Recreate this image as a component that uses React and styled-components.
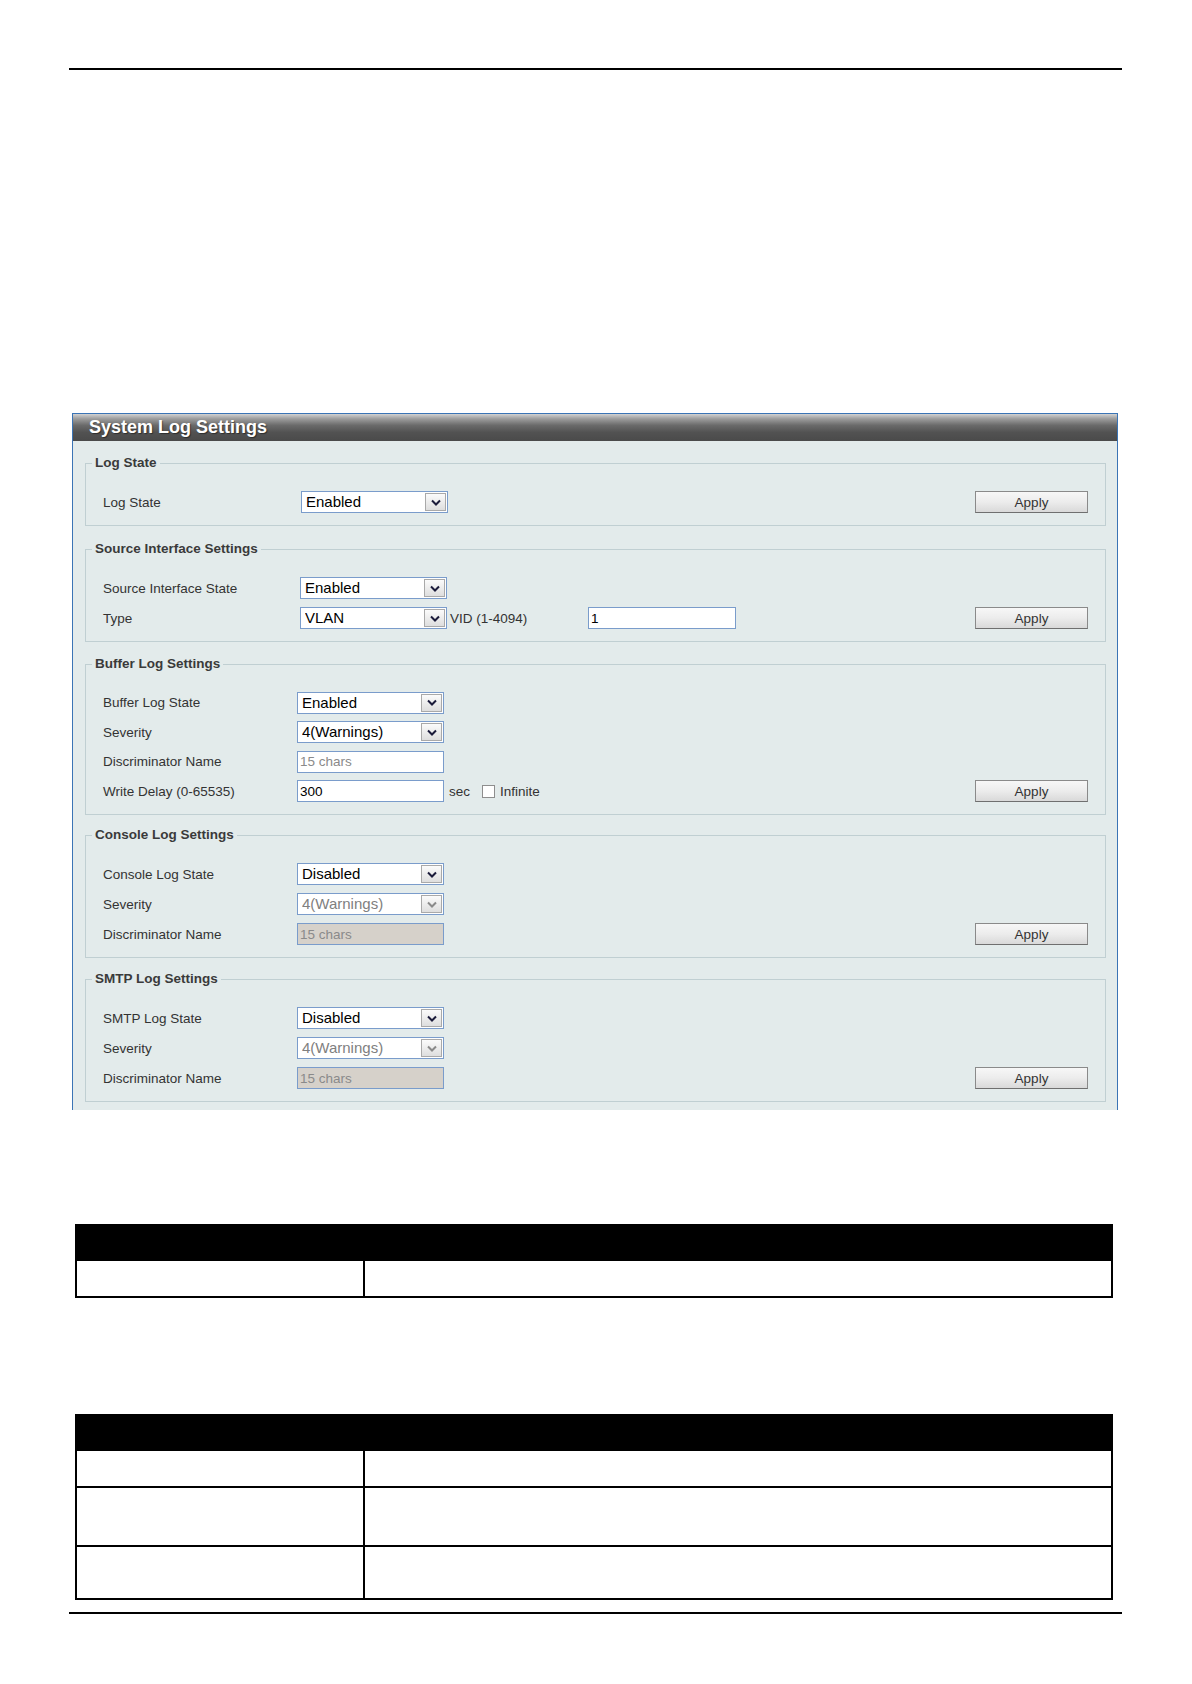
import React from "react";
import styled, { createGlobalStyle } from "styled-components";

const GlobalStyle = createGlobalStyle`
  html, body { margin: 0; padding: 0; background: #fff; }
  body { font-family: "Liberation Sans", Arial, sans-serif; color: #333; }
  * { box-sizing: border-box; }
`;

const Page = styled.div`
  width: 1192px;
  min-height: 1684px;
  padding-top: 68px;
`;

const Sheet = styled.div`
  margin-left: 69px;
  width: 1053px;
  display: flex;
  flex-direction: column;
`;

const Rule = styled.div`
  height: 2px;
  background: #000;
  margin-top: ${(p) => p.$top || 0}px;
`;

const Panel = styled.section`
  margin: 343px 4px 0 3px;
  border: 1px solid #3b74b5;
  border-bottom: none;
  background: #e3ebeb;
`;

const PanelHeader = styled.div`
  height: 27px;
  padding-left: 16px;
  display: flex;
  align-items: center;
  background: linear-gradient(
    to bottom,
    #d2d2d2 0%,
    #9c9c9c 18%,
    #6a6a6a 42%,
    #525252 68%,
    #4a4a4a 100%
  );
  color: #fff;
  font-size: 18px;
  font-weight: bold;
  text-shadow: 1px 1px 1px rgba(0, 0, 0, 0.45);
`;

const PanelBody = styled.div`
  padding: 14px 11px 8px 12px;
  display: flex;
  flex-direction: column;
`;

const Fieldset = styled.fieldset`
  margin: ${(p) => p.$top || 0}px 0 0 0;
  min-width: 0;
  border: 1px solid #c0cfd2;
  padding: 16px 17px 8px 17px;
`;

const Legend = styled.legend`
  margin-left: -11px;
  padding: 0 3px;
  font-size: 13.5px;
  line-height: 16px;
  font-weight: bold;
  color: #3a3a3a;
`;

const FieldBody = styled.div`
  display: flex;
  align-items: flex-end;
`;

const Rows = styled.div`
  flex: 1;
  display: flex;
  flex-direction: column;
`;

const Row = styled.div`
  height: ${(p) => p.$h || 30}px;
  display: flex;
  align-items: center;
`;

const Label = styled.span`
  width: ${(p) => p.$w || 194}px;
  flex: none;
  font-size: 13.5px;
  color: #333;
  white-space: nowrap;
`;

const Inline = styled.span`
  font-size: 13.5px;
  color: #333;
  margin-left: ${(p) => p.$ml || 0}px;
  width: ${(p) => (p.$w ? `${p.$w}px` : "auto")};
  flex: none;
  white-space: nowrap;
`;

const SelectBox = styled.div`
  width: ${(p) => p.$w || 147}px;
  height: 22px;
  flex: none;
  border: 1px solid #7a9ccb;
  background: #fff;
  display: flex;
  align-items: center;
  padding: 0 1px 0 4px;
  font-size: 15px;
  color: ${(p) => (p.$disabled ? "#808080" : "#000")};
`;

const SelectValue = styled.span`
  flex: 1;
  white-space: nowrap;
  overflow: hidden;
  line-height: 20px;
`;

const ArrowBox = styled.span`
  width: 21px;
  height: 18px;
  border: 1px solid #a9a9a9;
  background: linear-gradient(to bottom, #fbfbfb, #dedede);
  display: flex;
  align-items: center;
  justify-content: center;
`;

const TextBox = styled.div`
  width: ${(p) => p.$w || 147}px;
  height: 22px;
  flex: none;
  border: 1px solid #7a9ccb;
  background: ${(p) => (p.$disabled ? "#d6d1ca" : "#fff")};
  display: flex;
  align-items: center;
  padding-left: 2px;
  font-size: 13.5px;
  color: ${(p) => (p.$placeholder ? "#8a8a8a" : "#000")};
  white-space: nowrap;
`;

const CheckBox = styled.span`
  width: 13px;
  height: 13px;
  flex: none;
  margin-left: ${(p) => p.$ml || 0}px;
  border: 1px solid #8e8e8e;
  background: #fff;
`;

const ButtonCell = styled.div`
  height: 30px;
  display: flex;
  align-items: center;
`;

const ApplyButton = styled.button`
  width: 113px;
  height: 22px;
  padding: 0;
  border: 1px solid #8a8a8a;
  border-bottom-color: #6f6f6f;
  border-radius: 0;
  background: linear-gradient(to bottom, #f7f7f7 0%, #ececec 50%, #d9d9d9 100%);
  font-family: "Liberation Sans", Arial, sans-serif;
  font-size: 13.5px;
  color: #333;
`;

const Table = styled.table`
  border-collapse: collapse;
  width: 1038px;
  margin: ${(p) => p.$top}px 9px 0 6px;
  table-layout: fixed;
`;

const HeadCell = styled.th`
  height: 35px;
  background: #000;
  border: 2px solid #000;
  padding: 0;
`;

const Cell = styled.td`
  height: ${(p) => p.$h}px;
  border: 2px solid #000;
  padding: 0;
`;

const Chevron = ({ disabled }) => (
  <svg width="10" height="7" viewBox="0 0 10 7" aria-hidden="true">
    <polyline
      points="1,1.5 5,5.5 9,1.5"
      fill="none"
      stroke={disabled ? "#8a8a8a" : "#1b1b3a"}
      strokeWidth="2"
    />
  </svg>
);

const Select = ({ value, disabled, w }) => (
  <SelectBox $disabled={disabled} $w={w}>
    <SelectValue>{value}</SelectValue>
    <ArrowBox>
      <Chevron disabled={disabled} />
    </ArrowBox>
  </SelectBox>
);

const Section = ({ title, top, children }) => (
  <Fieldset $top={top}>
    <Legend>{title}</Legend>
    <FieldBody>
      <Rows>{children}</Rows>
      <ButtonCell>
        <ApplyButton>Apply</ApplyButton>
      </ButtonCell>
    </FieldBody>
  </Fieldset>
);

const LogSection = ({ title, stateLabel, top }) => (
  <Section title={title} top={top}>
    <Row>
      <Label>{stateLabel}</Label>
      <Select value="Disabled" />
    </Row>
    <Row>
      <Label>Severity</Label>
      <Select value="4(Warnings)" disabled />
    </Row>
    <Row>
      <Label>Discriminator Name</Label>
      <TextBox $disabled $placeholder>15 chars</TextBox>
    </Row>
  </Section>
);

const colW = 288;

export default function App() {
  return (
    <Page>
      <GlobalStyle />
      <Sheet>
        <Rule />
        <Panel>
          <PanelHeader>System Log Settings</PanelHeader>
          <PanelBody>
            <Section title="Log State">
              <Row>
                <Label $w={198}>Log State</Label>
                <Select value="Enabled" />
              </Row>
            </Section>

            <Section title="Source Interface Settings" top={15}>
              <Row>
                <Label $w={197}>Source Interface State</Label>
                <Select value="Enabled" />
              </Row>
              <Row>
                <Label $w={197}>Type</Label>
                <Select value="VLAN" />
                <Inline $ml={3} $w={138}>VID (1-4094)</Inline>
                <TextBox $w={148}>1</TextBox>
              </Row>
            </Section>

            <Section title="Buffer Log Settings" top={14}>
              <Row $h={29.5}>
                <Label>Buffer Log State</Label>
                <Select value="Enabled" />
              </Row>
              <Row $h={29.5}>
                <Label>Severity</Label>
                <Select value="4(Warnings)" />
              </Row>
              <Row $h={29.5}>
                <Label>Discriminator Name</Label>
                <TextBox $placeholder>15 chars</TextBox>
              </Row>
              <Row $h={29.5}>
                <Label>Write Delay (0-65535)</Label>
                <TextBox>300</TextBox>
                <Inline $ml={5}>sec</Inline>
                <CheckBox $ml={12} />
                <Inline $ml={5}>Infinite</Inline>
              </Row>
            </Section>

            <LogSection title="Console Log Settings" stateLabel="Console Log State" top={12} />
            <LogSection title="SMTP Log Settings" stateLabel="SMTP Log State" top={13} />
          </PanelBody>
        </Panel>

        <Table $top={114}>
          <colgroup>
            <col style={{ width: colW }} />
            <col />
          </colgroup>
          <thead>
            <tr>
              <HeadCell />
              <HeadCell />
            </tr>
          </thead>
          <tbody>
            <tr>
              <Cell $h={37} />
              <Cell $h={37} />
            </tr>
          </tbody>
        </Table>

        <Table $top={116}>
          <colgroup>
            <col style={{ width: colW }} />
            <col />
          </colgroup>
          <thead>
            <tr>
              <HeadCell />
              <HeadCell />
            </tr>
          </thead>
          <tbody>
            <tr>
              <Cell $h={37} />
              <Cell $h={37} />
            </tr>
            <tr>
              <Cell $h={59} />
              <Cell $h={59} />
            </tr>
            <tr>
              <Cell $h={53} />
              <Cell $h={53} />
            </tr>
          </tbody>
        </Table>

        <Rule $top={12} />
      </Sheet>
    </Page>
  );
}
